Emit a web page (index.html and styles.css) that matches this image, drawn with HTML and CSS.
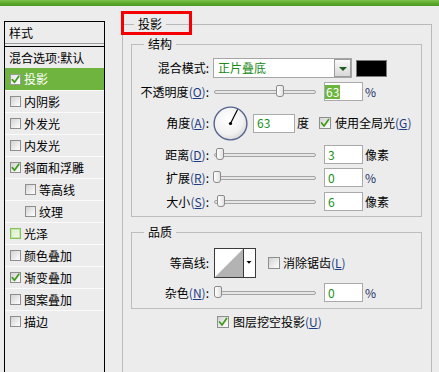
FILE: index.html
```html
<!DOCTYPE html>
<html lang="zh-CN">
<head>
<meta charset="utf-8">
<title>图层样式 - 投影</title>
<link rel="stylesheet" href="styles.css">
</head>
<body>
<div class="topbar"></div>
<div class="main">
  <div class="styles-panel">
    <div class="sp-head">样式</div>
    <div class="sp-row sp-blend">混合选项<span class="colon">:</span>默认</div>
    <div class="sp-row active"><span class="cb on-white"><svg viewBox="0 0 9 9" width="9" height="9"><path d="M1.3 4.6 L3.5 7.3 L7.8 1.2" /></svg></span>投影</div>
    <div class="sp-row"><span class="cb"></span>内阴影</div>
    <div class="sp-row"><span class="cb"></span>外发光</div>
    <div class="sp-row"><span class="cb"></span>内发光</div>
    <div class="sp-row"><span class="cb"><svg viewBox="0 0 9 9" width="9" height="9"><path d="M1.3 4.6 L3.5 7.3 L7.8 1.2" /></svg></span>斜面和浮雕</div>
    <div class="sp-row sub"><span class="cb"></span>等高线</div>
    <div class="sp-row sub"><span class="cb"></span>纹理</div>
    <div class="sp-row"><span class="cb hover"></span>光泽</div>
    <div class="sp-row"><span class="cb"></span>颜色叠加</div>
    <div class="sp-row"><span class="cb"><svg viewBox="0 0 9 9" width="9" height="9"><path d="M1.3 4.6 L3.5 7.3 L7.8 1.2" /></svg></span>渐变叠加</div>
    <div class="sp-row"><span class="cb"></span>图案叠加</div>
    <div class="sp-row"><span class="cb"></span>描边</div>
  </div>

  <div class="outer">
    <div class="legend">投影</div>
    <div class="red-mark"></div>

    <div class="group struct">
      <div class="legend">结构</div>

      <div class="row r-mode">
        <span class="lbl">混合模式:</span>
        <div class="select"><span class="sel-text">正片叠底</span><span class="sel-btn"><i></i></span></div>
        <span class="swatch"></span>
      </div>

      <div class="row r-std r-op">
        <span class="lbl">不透明度<span class="acc">(<u>O</u>)</span>:</span>
        <div class="slider"><span class="track"></span><span class="thumb" style="left:62px"></span></div>
        <span class="num num-sel"><span class="hl">63</span></span>
        <span class="unit pct">%</span>
      </div>

      <div class="row r-angle">
        <span class="lbl">角度<span class="acc">(<u>A</u>)</span>:</span>
        <svg class="dial" viewBox="0 0 35 35" width="35" height="35">
          <defs>
            <radialGradient id="dg" cx="0.42" cy="0.38" r="0.65">
              <stop offset="0" stop-color="#ffffff"/>
              <stop offset="0.7" stop-color="#f1f1f1"/>
              <stop offset="1" stop-color="#d6d6d6"/>
            </radialGradient>
          </defs>
          <circle cx="17.5" cy="17.5" r="16.4" fill="url(#dg)" stroke="#56638f" stroke-width="1.4"/>
          <line x1="17.5" y1="17.5" x2="24.6" y2="3.6" stroke="#000" stroke-width="1.2"/>
          <circle cx="17.5" cy="17.5" r="1.6" fill="#000"/>
        </svg>
        <span class="num num-angle">63</span>
        <span class="unit deg">度</span>
        <span class="cb cb12 gl"><svg viewBox="0 0 10 10" width="10" height="10"><path d="M1.6 5 L4 8 L8.6 1.4" /></svg></span>
        <span class="cb-text">使用全局光<span class="acc">(<u>G</u>)</span></span>
      </div>

      <div class="row r-std r-dist">
        <span class="lbl">距离<span class="acc">(<u>D</u>)</span>:</span>
        <div class="slider"><span class="track"></span><span class="thumb" style="left:2px"></span></div>
        <span class="num">3</span>
        <span class="unit">像素</span>
      </div>

      <div class="row r-std r-spread">
        <span class="lbl">扩展<span class="acc">(<u>R</u>)</span>:</span>
        <div class="slider"><span class="track"></span><span class="thumb" style="left:-1px"></span></div>
        <span class="num">0</span>
        <span class="unit pct">%</span>
      </div>

      <div class="row r-std r-size">
        <span class="lbl">大小<span class="acc">(<u>S</u>)</span>:</span>
        <div class="slider"><span class="track"></span><span class="thumb" style="left:3px"></span></div>
        <span class="num">6</span>
        <span class="unit">像素</span>
      </div>
    </div>

    <div class="group quality">
      <div class="legend">品质</div>

      <div class="row r-contour">
        <span class="lbl">等高线:</span>
        <svg class="contour" viewBox="0 0 42 30" width="42" height="30">
          <rect x="0.5" y="0.5" width="41" height="29" fill="#fff" stroke="#3a3a3a"/>
          <polygon points="1,29 29,1 29,29" fill="#b3b3b3"/>
          <line x1="29.5" y1="0.5" x2="29.5" y2="29.5" stroke="#3a3a3a"/>
          <polygon points="32.5,13 37.5,13 35,15.8" fill="#000"/>
        </svg>
        <span class="cb cb12 aa"></span>
        <span class="cb-text">消除锯齿<span class="acc">(<u>L</u>)</span></span>
      </div>

      <div class="row r-std r-noise">
        <span class="lbl">杂色<span class="acc">(<u>N</u>)</span>:</span>
        <div class="slider"><span class="track"></span><span class="thumb" style="left:0px"></span></div>
        <span class="num">0</span>
        <span class="unit pct">%</span>
      </div>
    </div>

    <div class="row r-knock">
      <span class="cb cb12"><svg viewBox="0 0 10 10" width="10" height="10"><path d="M1.6 5 L4 8 L8.6 1.4" /></svg></span>
      <span class="cb-text">图层挖空投影<span class="acc">(<u>U</u>)</span></span>
    </div>
  </div>
</div>
</body>
</html>
```

FILE: styles.css
```css
* { box-sizing: border-box; }

html, body { margin: 0; padding: 0; }

body {
  width: 439px;
  height: 372px;
  overflow: hidden;
  background: #ececec;
  color: #000;
  font-family: "Noto Sans CJK SC", "Noto Sans", sans-serif;
  font-size: 12px;
  line-height: 14px;
}

.topbar {
  height: 6px;
  background: linear-gradient(#7cc24a, #5aa62b 60%, #4e9a22);
}

.main {
  display: flex;
  align-items: flex-start;
  padding-left: 4px;
}

/* ---------- left styles list ---------- */
.styles-panel {
  width: 101px;
  height: 360px;
  margin-top: 15px;
  border: 1px solid #000;
  border-bottom: none;
  flex-shrink: 0;
}

.sp-head {
  height: 22px;
  padding-left: 4px;
  display: flex;
  align-items: center;
  border-bottom: 1px solid #9c9c9c;
}

.sp-row {
  height: 22px;
  display: flex;
  align-items: center;
  padding-left: 5px;
  border-top: 1px solid #fbfbfb;
  white-space: nowrap;
}

.sp-blend {
  margin-top: 2px;
  padding-left: 4px;
  border-top: 1px solid #000;
}

.sp-blend .colon { color: #6a2a7a; }

.sp-row.active {
  background: #6eb43f;
  color: #fff;
  border-top: none;
}

.sp-row.sub { padding-left: 20px; }

/* checkbox */
.cb {
  width: 11px;
  height: 11px;
  flex-shrink: 0;
  margin-right: 3px;
  border: 1px solid #8e8e8e;
  background: linear-gradient(135deg, #d2d2d2, #f4f4f4 75%, #fdfdfd);
  display: flex;
  align-items: center;
  justify-content: center;
}

.cb svg { display: block; }
.cb svg path {
  fill: none;
  stroke: #3f9b1c;
  stroke-width: 1.7;
  stroke-linecap: round;
  stroke-linejoin: round;
}

.cb.on-white { background: linear-gradient(135deg, #e6e6e6, #ffffff); border-color: #9a9a9a; }

.cb.hover {
  border-color: #86c25a;
  background: linear-gradient(135deg, #d9edc9, #f3fbec);
  box-shadow: inset 0 0 0 1px #c6e4ac;
}

.cb12 { width: 12px; height: 12px; margin-right: 0; }

/* ---------- right side ---------- */
.outer {
  position: relative;
  width: 310px;
  height: 360px;
  margin: 18px 0 0 17px;
  border: 1px solid #b9b9b9;
  border-bottom: none;
  flex-shrink: 0;
}

.legend {
  width: fit-content;
  height: 14px;
  margin: -8px 0 0 11px;
  padding: 0 4px;
  background: #ececec;
  white-space: nowrap;
}

.red-mark {
  position: absolute;
  left: -2px;
  top: -14px;
  width: 71px;
  height: 24px;
  border: 3px solid #f50000;
}

.group {
  margin: 13px 9px 0 8px;
  border: 1px solid #bdbdbd;
}

.group .legend { margin-left: 12px; }

.struct { padding-bottom: 5px; }
.quality { margin-top: 15px; padding-bottom: 6px; }

.row {
  display: flex;
  align-items: center;
  white-space: nowrap;
}

.lbl {
  width: 77px;
  flex-shrink: 0;
  text-align: right;
}

.acc { color: #1d3c82; }
.acc u { text-decoration: underline; text-underline-offset: 1px; }

/* blend mode */
.r-mode { height: 20px; margin-top: 7px; }

.select {
  width: 139px;
  height: 20px;
  margin-left: 4px;
  border: 1px solid #a6a6a6;
  background: #fff;
  display: flex;
  align-items: center;
}

.sel-text {
  padding-left: 4px;
  color: #1a8a1a;
}

.sel-btn {
  margin-left: auto;
  width: 17px;
  height: 18px;
  border: 1px solid #9c9c9c;
  background: linear-gradient(#fafafa, #d8d8d8);
  display: flex;
  align-items: center;
  justify-content: center;
}

.sel-btn i {
  width: 0;
  height: 0;
  margin-top: 2px;
  border-left: 4px solid transparent;
  border-right: 4px solid transparent;
  border-top: 4px solid #1f5a1f;
}

.swatch {
  width: 31px;
  height: 17px;
  margin-left: 4px;
  background: #000;
  border: 1px solid #7a7a7a;
}

/* standard slider rows */
.r-std { height: 19px; margin-top: 4px; }
.r-size { margin-top: 5px; }
.r-noise { margin-top: 5px; }

.slider {
  position: relative;
  width: 102px;
  height: 19px;
  margin-left: 5px;
  display: flex;
  align-items: center;
}

.track {
  width: 100%;
  height: 4px;
  border: 1px solid #a4a4a4;
  border-radius: 2px;
  background: #e6e6e6;
}

.thumb {
  position: absolute;
  top: 3px;
  width: 8px;
  height: 12px;
  border: 1px solid #8a8a8a;
  border-radius: 2px 2px 3px 3px;
  background: linear-gradient(90deg, #ffffff, #e2e2e2);
}

.num {
  width: 39px;
  height: 19px;
  margin-left: 8px;
  padding-left: 3px;
  border: 1px solid #aaaaaa;
  background: #fff;
  color: #1a8f1a;
  display: flex;
  align-items: center;
}

.num-sel { padding-left: 0; }

.hl {
  background: #6cb53f;
  color: #fff;
  padding: 0 1px;
  line-height: 14px;
}

.unit { margin-left: 2px; }
.pct { color: #1d2f66; }

/* angle row */
.r-angle { height: 36px; margin-top: 4px; }

.dial {
  display: block;
  margin-left: 4px;
  flex-shrink: 0;
}

.num-angle { width: 42px; margin-left: 5px; }

.deg { margin-left: 2px; }

.gl { margin-left: 10px; }

.cb-text { margin-left: 4px; }

/* quality rows */
.r-contour { height: 30px; margin-top: 9px; }

.contour {
  display: block;
  margin-left: 5px;
  flex-shrink: 0;
}

.aa { margin-left: 12px; }
.r-contour .cb-text { margin-left: 3px; }

/* knockout */
.r-knock {
  height: 12px;
  margin: 7px 0 0 94px;
}
```
